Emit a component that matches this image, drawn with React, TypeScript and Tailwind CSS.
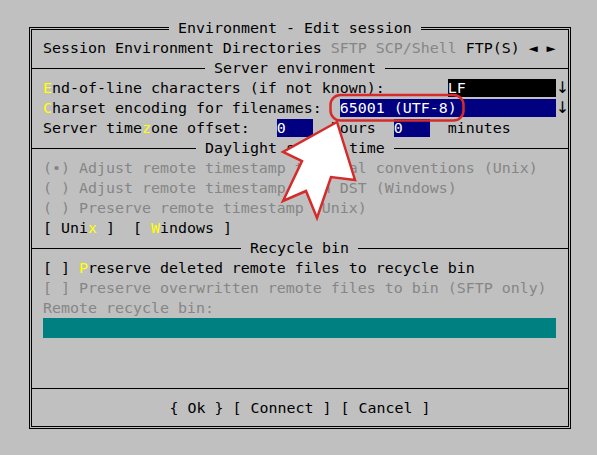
import React from 'react';

const Hot: React.FC<{ c: string }> = ({ c }) => <span className="text-[#ffff00]">{c}</span>;

const Off: React.FC<{ children: React.ReactNode }> = ({ children }) => (
  <span className="text-[#868686]">{children}</span>
);

const Down: React.FC = () => (
  <span
    className="inline-block w-[9px] text-center text-[16px] leading-5 align-top"
    style={{ fontFamily: '"DejaVu Sans", sans-serif' }}
  >
    ↓
  </span>
);

const Row: React.FC<{ children?: React.ReactNode }> = ({ children }) => (
  <div className="h-5 pl-[11px] whitespace-pre">{children}</div>
);

const Separator: React.FC<{ title?: string; lineClass?: string }> = ({ title, lineClass }) => (
  <div className="h-5 flex items-start">
    {title && (
      <>
        <div className={`h-px mt-[10px] bg-black ${lineClass}`} />
        <span className="whitespace-pre">{` ${title} `}</span>
      </>
    )}
    <div className="h-px mt-[10px] bg-black flex-1" />
  </div>
);

const Annotation: React.FC = () => (
  <svg className="absolute inset-0 pointer-events-none" width="597" height="455" viewBox="0 0 597 455">
    <rect x="330.5" y="95" width="133" height="25.5" rx="10" fill="none" stroke="#d52b2b" strokeWidth="2.5" />
    <polygon
      points="337,122 283,152 302,161 283,201 306,191 317,218 331,177 355,180"
      fill="#ffffff"
      stroke="#d52b2b"
      strokeWidth="2.5"
      strokeLinejoin="miter"
    />
  </svg>
);

export default function App() {
  return (
    <div
      className="relative w-[597px] h-[455px] overflow-hidden bg-[#c0c0c0] pt-[27px] pl-[29px] text-black text-[14.95px] leading-5"
      style={{ fontFamily: '"DejaVu Sans Mono", "Liberation Mono", monospace' }}
    >
      <div className="relative w-[542px] h-[402px] border-[3px] border-double border-black pt-2">
        <div className="absolute left-[137px] top-[-12px] h-5 bg-[#c0c0c0] whitespace-pre">
          {' Environment - Edit session '}
        </div>

        <Row>
          {'Session Environment Directories '}
          <Off>SFTP SCP/Shell</Off>
          {' FTP(S) ◄ ►'}
        </Row>
        <Separator title="Server environment" lineClass="w-[173px]" />
        <Row>
          <Hot c="E" />
          {'nd-of-line characters (if not known):       '}
          <span className="bg-black text-white">{'LF          '}</span>
          <Down />
        </Row>
        <Row>
          <Hot c="C" />
          {'harset encoding for filenames:  '}
          <span className="bg-[#000080] text-white">{'65001 (UTF-8)           '}</span>
          <Down />
        </Row>
        <Row>
          {'Server time'}
          <Hot c="z" />
          {'one offset:   '}
          <span className="bg-[#000080] text-white">{'0   '}</span>
          {'  hours  '}
          <span className="bg-[#000080] text-white">{'0   '}</span>
          {'  minutes'}
        </Row>
        <Separator title="Daylight saving time" lineClass="w-[164px]" />
        <Row>
          <Off>{'(•) Adjust remote timestamp to local conventions (Unix)'}</Off>
        </Row>
        <Row>
          <Off>{'( ) Adjust remote timestamp with DST (Windows)'}</Off>
        </Row>
        <Row>
          <Off>{'( ) Preserve remote timestamp (Unix)'}</Off>
        </Row>
        <Row>
          {'[ Uni'}
          <Hot c="x" />
          {' ]  [ '}
          <Hot c="W" />
          {'indows ]'}
        </Row>
        <Separator title="Recycle bin" lineClass="w-[209px]" />
        <Row>
          {'[ ] '}
          <Hot c="P" />
          {'reserve deleted remote files to recycle bin'}
        </Row>
        <Row>
          <Off>{'[ ] Preserve overwritten remote files to bin (SFTP only)'}</Off>
        </Row>
        <Row>
          <Off>Remote recycle bin:</Off>
        </Row>
        <div className="h-5 pl-[11px]">
          <div className="h-5 w-[513px] bg-[#008080]" />
        </div>
        <div className="h-5" />
        <div className="h-5" />
        <Separator />
        <div className="h-5 flex justify-center whitespace-pre">{'{ Ok } [ Connect ] [ Cancel ]'}</div>
      </div>
      <Annotation />
    </div>
  );
}
